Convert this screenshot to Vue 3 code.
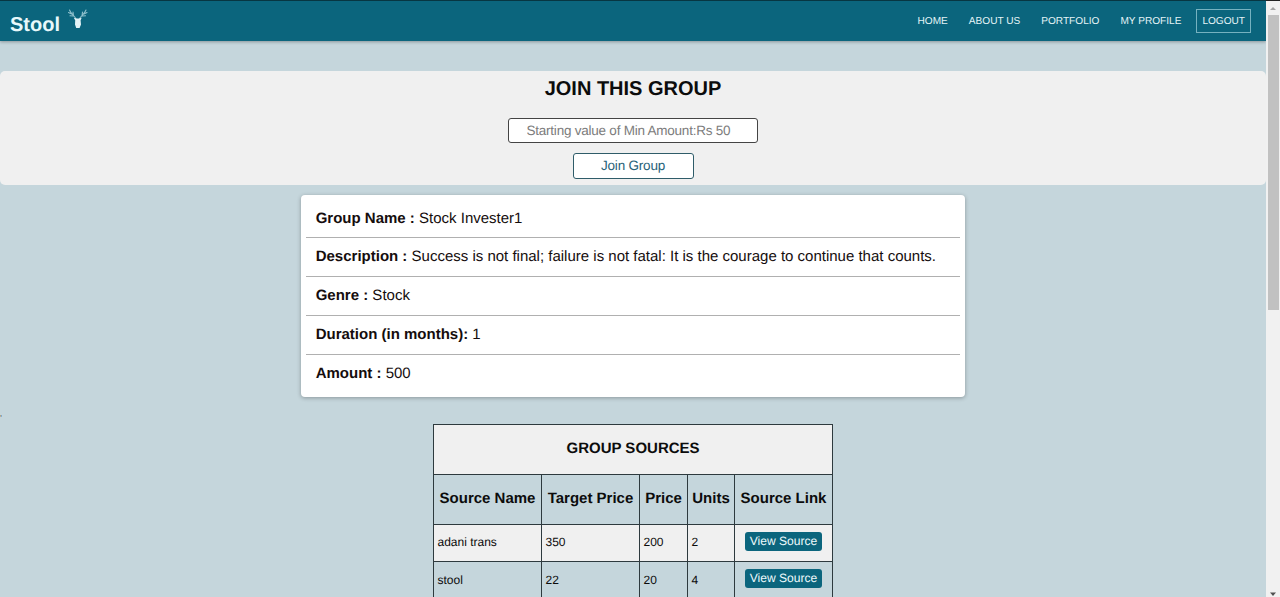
<script setup>
const links = ['HOME', 'ABOUT US', 'PORTFOLIO', 'MY PROFILE']
const details = [
  { label: 'Group Name :', value: 'Stock Invester1' },
  { label: 'Description :', value: 'Success is not final; failure is not fatal: It is the courage to continue that counts.' },
  { label: 'Genre :', value: 'Stock' },
  { label: 'Duration (in months):', value: '1' },
  { label: 'Amount :', value: '500' },
]
const columns = ['Source Name', 'Target Price', 'Price', 'Units', 'Source Link']
const sources = [
  { name: 'adani trans', target: 350, price: 200, units: 2 },
  { name: 'stool', target: 22, price: 20, units: 4 },
]
</script>

<template>
  <div class="window">
    <div class="page">
      <header class="navbar">
        <div class="brand">
          <span class="brand-name">Stool</span>
          <svg class="deer" viewBox="0 0 22 22" width="22" height="22">
            <g fill="none" stroke="#8fc0cc" stroke-width="1.1" stroke-linecap="round">
              <path d="M9 11 C7.500 7.500 4.500 7 2.500 2 M4.500 6 L1.500 4.500 M6 8 L3 7.800 M6.500 8 L6 4" />
              <path d="M12.500 11 C14 7.500 17 7 19 2 M17 6 L20 4.500 M15.500 8 L18.500 7.800 M15 8 L15.500 4" />
            </g>
            <path d="M6.800 9.800 L9.500 10.600 H12 L14.700 9.800 L13.600 12.200 L14 16.500 L12.600 20 H9.200 L8 16.500 L8.200 12.200 Z" fill="#e4f3f6" />
          </svg>
        </div>
        <nav class="links">
          <a v-for="link in links" :key="link">{{ link }}</a>
          <a class="logout">LOGOUT</a>
        </nav>
      </header>

      <section class="join">
        <h1>JOIN THIS GROUP</h1>
        <input type="text" placeholder="Starting value of Min Amount:Rs 50" />
        <button type="button">Join Group</button>
      </section>

      <section class="card">
        <p v-for="d in details" :key="d.label"><b>{{ d.label }}</b> {{ d.value }}</p>
      </section>

      <div class="comma">,</div>

      <table>
        <colgroup>
          <col class="c-name" /><col class="c-target" /><col class="c-price" /><col class="c-units" /><col class="c-link" />
        </colgroup>
        <thead>
          <tr class="title"><th colspan="5">GROUP SOURCES</th></tr>
          <tr class="heads"><th v-for="c in columns" :key="c">{{ c }}</th></tr>
        </thead>
        <tbody>
          <tr v-for="s in sources" :key="s.name">
            <td>{{ s.name }}</td>
            <td>{{ s.target }}</td>
            <td>{{ s.price }}</td>
            <td>{{ s.units }}</td>
            <td class="link-cell"><span class="view">View Source</span></td>
          </tr>
        </tbody>
      </table>
    </div>

    <aside class="scrollbar">
      <svg class="arrow" viewBox="0 0 14 14" width="14" height="14"><path d="M4 9 L7 6 L10 9 Z" fill="#a3a3a3" /></svg>
      <div class="thumb"></div>
      <svg class="arrow" viewBox="0 0 14 14" width="14" height="14"><path d="M4 9.500 L7 13 L10 9.500 Z" fill="#505050" /></svg>
    </aside>
  </div>
</template>

<style>
body {
  margin: 0;
  overflow: hidden;
}
</style>

<style scoped>
* {
  box-sizing: border-box;
}
.window {
  display: flex;
  height: 597px;
  overflow: hidden;
  background: #c5d6dc;
  font-family: "Liberation Sans", Arial, sans-serif;
  color: #0c0c0c;
  text-rendering: geometricPrecision;
}
.page {
  width: 1266px;
  flex: none;
  height: 597px;
  overflow: hidden;
}
.navbar {
  height: 41px;
  border-top: 1px solid #073642;
  background: #0b657d;
  box-shadow: 0 1px 3px rgba(0, 0, 0, 0.3);
  display: flex;
  justify-content: space-between;
  padding: 0 15px 0 10px;
}
.brand {
  display: flex;
  color: #e8f8fb;
}
.brand-name {
  font-size: 20px;
  font-weight: bold;
  line-height: 24px;
  margin-top: 12px;
  width: 57px;
}
.deer {
  margin-top: 7px;
}
.links {
  display: flex;
  align-items: center;
  gap: 21px;
  height: 40px;
  font-size: 10.1px;
  line-height: 12px;
  color: #e3f3f6;
}
.links a {
  padding-top: 1px;
}
.links .logout {
  border: 1px solid #76b2c0;
  height: 24px;
  line-height: 22px;
  padding: 1px 5px 0;
  margin-left: -6px;
}
.join {
  height: 114px;
  margin-top: 30px;
  background: #f0f0f0;
  border-radius: 5px;
  display: flex;
  flex-direction: column;
  align-items: center;
}
h1 {
  margin: 6px 0 17px;
  font-size: 20px;
  line-height: 24px;
}
input {
  width: 250px;
  height: 25px;
  padding: 0 17.500px 1px;
  border: 1px solid #444;
  border-radius: 3px;
  background: #fff;
  font: 13.5px "Liberation Sans", Arial, sans-serif;
  letter-spacing: -0.23px;
  text-rendering: geometricPrecision;
}
input::placeholder {
  color: #7c7c7c;
}
button {
  width: 121px;
  height: 26px;
  margin-top: 10px;
  padding: 0 0 2px;
  border: 1px solid #2f5c69;
  border-radius: 3px;
  background: #fff;
  color: #28637a;
  font: 13.5px "Liberation Sans", Arial, sans-serif;
  letter-spacing: -0.2px;
  text-rendering: geometricPrecision;
}
.card {
  width: 664.500px;
  height: 202px;
  margin: 10px 0 0 300.600px;
  padding: 4.800px 5px;
  background: #fff;
  border-radius: 4px;
  box-shadow: 0 1px 4px rgba(0, 0, 0, 0.3);
  font-size: 15px;
  color: #150d0d;
}
.card p {
  height: 38.700px;
  margin: 0;
  padding-left: 10.100px;
  line-height: 38px;
  border-bottom: 1px solid #b0b0b0;
  white-space: nowrap;
}
.card p:last-child {
  border: 0;
}
.comma {
  height: 27px;
  padding-top: 13px;
  font-size: 7px;
  line-height: 10px;
}
table {
  width: 400px;
  margin-left: 433px;
  table-layout: fixed;
  border-collapse: collapse;
  font-size: 12px;
}
.c-name { width: 108px; }
.c-target { width: 98px; }
.c-price { width: 48px; }
.c-units { width: 47px; }
.c-link { width: 98px; }
th,
td {
  border: 1px solid #2e3a3e;
  padding: 0 4px;
  white-space: nowrap;
}
th {
  padding: 0 0 2px;
  height: 50px;
  font-size: 15px;
}
td {
  height: 37px;
  padding: 0 4px 2px 3.500px;
}
.title,
tbody tr:nth-child(odd) {
  background: #f0f0f0;
}
.link-cell {
  text-align: center;
  padding: 0 0 4px;
}
tbody tr:nth-child(even) td {
  height: 38px;
}
.view {
  display: inline-block;
  width: 77px;
  height: 19px;
  line-height: 19px;
  border-radius: 3px;
  background: #0b657d;
  color: #eefafc;
  font-size: 12.100px;
}
.scrollbar {
  width: 14px;
  flex: none;
  display: flex;
  flex-direction: column;
  background: #f1f1f1;
  border-top: 1px solid #222;
}
.arrow {
  display: block;
  flex: none;
}
.thumb {
  height: 295px;
  width: 11px;
  margin: 0 0 auto 1.500px;
  background: #c1c1c1;
}
</style>
